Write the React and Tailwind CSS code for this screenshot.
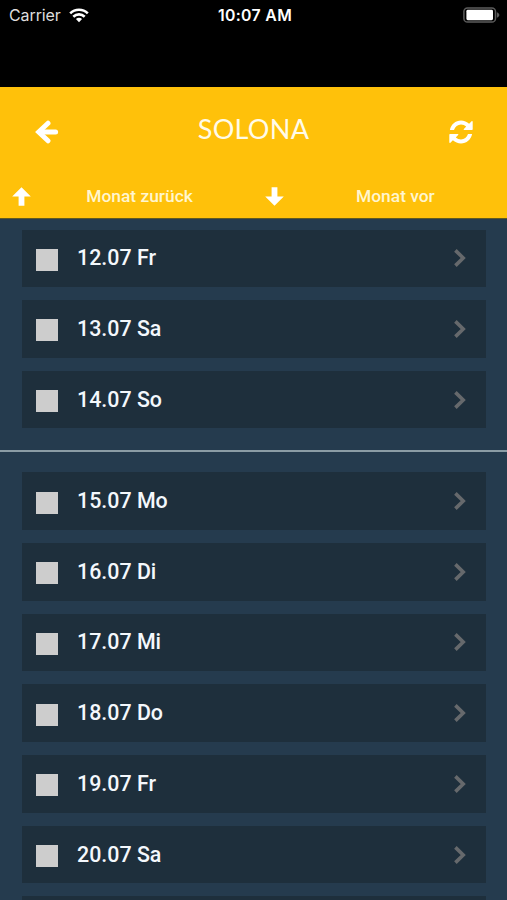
const firstWeek = ["12.07 Fr", "13.07 Sa", "14.07 So"];
const secondWeek = ["15.07 Mo", "16.07 Di", "17.07 Mi", "18.07 Do", "19.07 Fr", "20.07 Sa"];

function WifiIcon() {
  return (
    <svg viewBox="0 0 20 15" className="ml-[8px] h-[15px] w-[20px]" fill="none" stroke="white" strokeWidth="2.6">
      <path d="M1.2 5.4a12.6 12.6 0 0 1 17.6 0" />
      <path d="M4.3 8.7a8.2 8.2 0 0 1 11.4 0" />
      <path d="M10 14.2 6.9 11.1a4.5 4.5 0 0 1 6.2 0z" fill="white" stroke="none" />
    </svg>
  );
}

function BatteryIcon() {
  return (
    <svg viewBox="0 0 37 16" className="h-[16px] w-[37px]">
      <rect x="0.9" y="0.9" width="31.6" height="14.2" rx="3.6" fill="none" stroke="#5c5c5c" strokeWidth="1.5" />
      <rect x="3.4" y="2.8" width="26.6" height="10.4" rx="1.4" fill="white" />
      <path d="M33.8 5.3c3.4 1.2 3.4 4.2 0 5.4z" fill="#5c5c5c" />
    </svg>
  );
}

function BackIcon() {
  return (
    <svg viewBox="0 0 24 24" className="h-[24px] w-[24px]" fill="none" stroke="white" strokeLinecap="round">
      <path d="M4.6 12H20.6" strokeWidth="5" />
      <path d="M13 3.2 3.7 12 13 20.8" strokeWidth="5" />
    </svg>
  );
}

function RefreshIcon() {
  return (
    <svg viewBox="0 0 24 24" className="h-[24px] w-[24px]" fill="white">
      <path d="M0.9 10C1.9 4.6 6.5 0.5 12 0.5c3.1 0 6 1.3 8.1 3.2L22.6 1.3c.5-.4 1.1-.1 1.1.5V9.3q0 .7-.7.7H15.4c-.7 0-1-.6-.5-1.1l2.3-2.3A7.5 7.5 0 0 0 12 4.500C8.700 4.500 6.100 6.700 5 10z" />
      <path d="M0.9 10C1.9 4.6 6.5 0.5 12 0.5c3.1 0 6 1.3 8.1 3.2L22.6 1.3c.5-.4 1.1-.1 1.1.5V9.3q0 .7-.7.7H15.4c-.7 0-1-.6-.5-1.1l2.3-2.3A7.5 7.5 0 0 0 12 4.500C8.700 4.500 6.100 6.700 5 10z" transform="rotate(180 12 12)" />
    </svg>
  );
}

function Arrow({ down }) {
  return (
    <svg viewBox="0 0 19 19" className={down ? "h-[19px] w-[19px] rotate-180" : "h-[19px] w-[19px]"} fill="white">
      <path d="M9.5 0.2 18.8 9.6H12.4V18.8H6.6V9.6H0.2z" />
    </svg>
  );
}

function StatusBar() {
  return (
    <div className="grid h-[87px] grid-cols-3 items-start bg-black px-[9px] text-[16px] leading-[30px] text-white">
      <div className="flex items-center font-['Inter'] text-[#dedede]">
        <span className="w-[52px] tracking-[-0.1px] whitespace-nowrap">Carrier</span>
        <WifiIcon />
      </div>
      <div className="pl-[3px] text-center font-['Inter'] text-[15.8px] leading-[31px] font-semibold tracking-[0.35px] whitespace-nowrap">10:07 AM</div>
      <div className="-mr-[2px] flex h-[30px] items-center justify-end">
        <BatteryIcon />
      </div>
    </div>
  );
}

function Row({ label }) {
  return (
    <div className="flex h-[57.5px] shrink-0 items-center bg-[#1e2f3c] pr-[20px] pl-[14px]">
      <div className="mt-[3px] h-[22px] w-[22px] bg-[#cdcdcd]" />
      <div className="ml-[19px] flex-1 text-[21.4px] leading-[28px] font-medium text-[#f4f8fc]">{label}</div>
      <svg viewBox="0 0 12 18" className="h-[18px] w-[12px]" fill="none" stroke="#66696c" strokeWidth="3.6">
        <path d="M1.4 1.4 9.2 9 1.4 16.6" />
      </svg>
    </div>
  );
}

export default function App() {
  return (
    <div className="flex h-[900px] w-[507px] flex-col overflow-hidden bg-[#253b4e] font-['Roboto',sans-serif]">
      <StatusBar />
      <header className="h-[131.5px] shrink-0 border-b border-[#5f5a22] bg-[#ffc10a] text-white">
        <div className="flex h-[90px] items-center justify-between pr-[34px] pl-[35px]">
          <BackIcon />
          <h1 className="mt-[-6px] -ml-[1px] font-['Lato'] text-[27px] leading-[36px] tracking-[0.3px] text-[#fffbe8]">SOLONA</h1>
          <RefreshIcon />
        </div>
        <div className="flex h-[39px] items-center pl-[12px] text-[17.4px] font-medium text-[#fff6cf]">
          <Arrow />
          <div className="w-[217px] text-center">Monat zurück</div>
          <div className="ml-[17px]">
            <Arrow down />
          </div>
          <div className="ml-[72px]">Monat vor</div>
        </div>
      </header>
      <main className="flex flex-1 flex-col overflow-hidden pt-[11px]">
        <div className="mr-[21px] ml-[22px] flex flex-col gap-[13.2px]">
          {firstWeek.map((label) => <Row key={label} label={label} />)}
        </div>
        <div className="mt-[21.4px] mb-[20.6px] h-[2px] shrink-0 bg-[#8b9ca5]" />
        <div className="mr-[21px] ml-[22px] flex flex-col gap-[13.2px]">
          {secondWeek.map((label) => <Row key={label} label={label} />)}
          <div className="h-[4px] bg-[#1e2f3c]" />
        </div>
      </main>
    </div>
  );
}
